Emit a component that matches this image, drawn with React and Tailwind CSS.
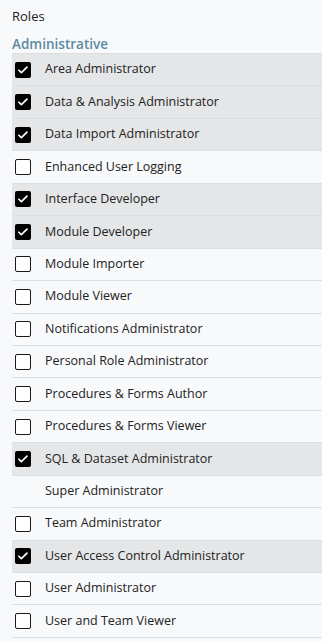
import React from 'react';

const roles = [
  ['Area Administrator', true],
  ['Data & Analysis Administrator', true],
  ['Data Import Administrator', true],
  ['Enhanced User Logging', false],
  ['Interface Developer', true],
  ['Module Developer', true],
  ['Module Importer', false],
  ['Module Viewer', false],
  ['Notifications Administrator', false],
  ['Personal Role Administrator', false],
  ['Procedures & Forms Author', false],
  ['Procedures & Forms Viewer', false],
  ['SQL & Dataset Administrator', true],
  ['Super Administrator', null],
  ['Team Administrator', false],
  ['User Access Control Administrator', true],
  ['User Administrator', false],
  ['User and Team Viewer', false],
];

function Box({ checked }) {
  if (checked === null) return <span className="h-4 w-4" />;
  if (checked) {
    return (
      <span className="flex h-4 w-4 items-center justify-center rounded-[2px] bg-black">
        <svg viewBox="0 0 16 16" className="h-3 w-3" fill="none">
          <path d="M2.5 8.3l3.3 3.2 7.5-7.4" stroke="white" strokeWidth="2.2" strokeLinecap="round" strokeLinejoin="round" />
        </svg>
      </span>
    );
  }
  return <span className="h-4 w-4 rounded-[2px] border-[1.5px] border-[#1a1a1a] bg-white" />;
}

export default function App() {
  return (
    <div
      className="min-h-[642px] w-[322px] bg-[#f8f9fb] text-[#222]"
      style={{ fontFamily: '"Open Sans", "Noto Sans", sans-serif' }}
    >
      <p className="px-3 pt-[7px] text-[13px] leading-[18px]">Roles</p>
      <h2 className="px-3 pt-[10px] text-[13.5px] font-semibold leading-[18px] text-[#5b8ba1]">
        Administrative
      </h2>
      <ul className="ml-3 border-t border-[#dcdfe2]">
        {roles.map(([name, checked]) => (
          <li
            key={name}
            className={`flex h-[32.45px] items-center gap-[14px] border-b border-[#dcdfe2] pl-[3px] ${
              checked ? 'bg-[#e5e6e8]' : ''
            }`}
          >
            <Box checked={checked} />
            <span className="text-[12.5px]">{name}</span>
          </li>
        ))}
      </ul>
    </div>
  );
}
